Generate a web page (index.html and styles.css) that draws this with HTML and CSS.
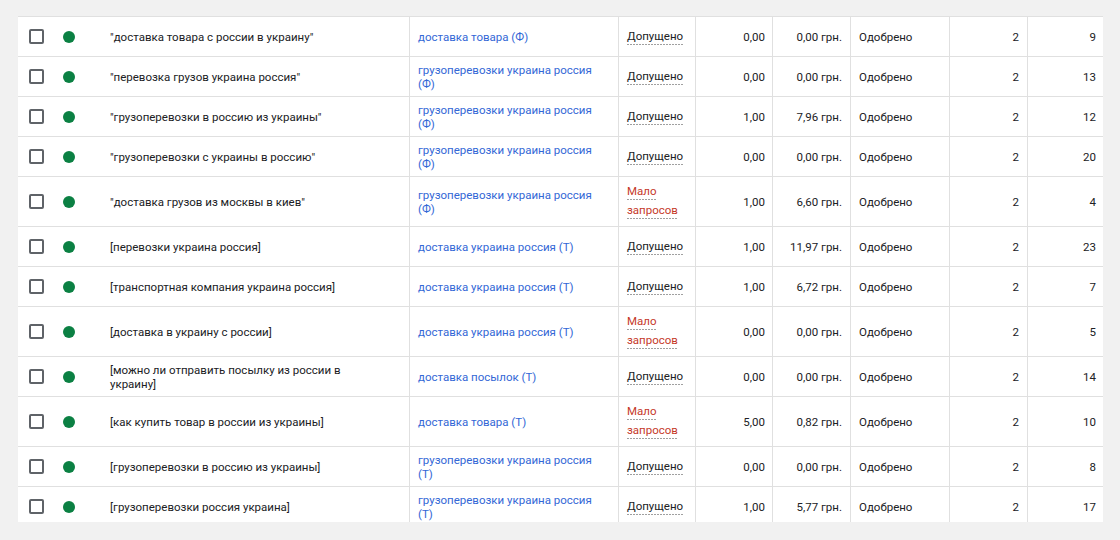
FILE: index.html
```html
<!DOCTYPE html>
<html lang="ru">
<head>
<meta charset="utf-8">
<link rel="stylesheet" href="styles.css">
</head>
<body>
<div class="sheet">
  <div class="row">
    <div class="c cb"><span class="box"></span></div><div class="c st"><span class="dot"></span></div>
    <div class="c kw">"доставка товара с россии в украину"</div>
    <div class="c crit"><a>доставка товара (Ф)</a></div>
    <div class="c status"><div><span class="u">Допущено</span></div></div>
    <div class="c num">0,00</div><div class="c num">0,00 грн.</div>
    <div class="c txt">Одобрено</div><div class="c num">2</div><div class="c num">9</div>
  </div>
  <div class="row">
    <div class="c cb"><span class="box"></span></div><div class="c st"><span class="dot"></span></div>
    <div class="c kw">"перевозка грузов украина россия"</div>
    <div class="c crit"><a>грузоперевозки украина россия (Ф)</a></div>
    <div class="c status"><div><span class="u">Допущено</span></div></div>
    <div class="c num">0,00</div><div class="c num">0,00 грн.</div>
    <div class="c txt">Одобрено</div><div class="c num">2</div><div class="c num">13</div>
  </div>
  <div class="row">
    <div class="c cb"><span class="box"></span></div><div class="c st"><span class="dot"></span></div>
    <div class="c kw">"грузоперевозки в россию из украины"</div>
    <div class="c crit"><a>грузоперевозки украина россия (Ф)</a></div>
    <div class="c status"><div><span class="u">Допущено</span></div></div>
    <div class="c num">1,00</div><div class="c num">7,96 грн.</div>
    <div class="c txt">Одобрено</div><div class="c num">2</div><div class="c num">12</div>
  </div>
  <div class="row">
    <div class="c cb"><span class="box"></span></div><div class="c st"><span class="dot"></span></div>
    <div class="c kw">"грузоперевозки с украины в россию"</div>
    <div class="c crit"><a>грузоперевозки украина россия (Ф)</a></div>
    <div class="c status"><div><span class="u">Допущено</span></div></div>
    <div class="c num">0,00</div><div class="c num">0,00 грн.</div>
    <div class="c txt">Одобрено</div><div class="c num">2</div><div class="c num">20</div>
  </div>
  <div class="row">
    <div class="c cb"><span class="box"></span></div><div class="c st"><span class="dot"></span></div>
    <div class="c kw">"доставка грузов из москвы в киев"</div>
    <div class="c crit"><a>грузоперевозки украина россия (Ф)</a></div>
    <div class="c status low"><div><span class="u">Мало запросов</span></div></div>
    <div class="c num">1,00</div><div class="c num">6,60 грн.</div>
    <div class="c txt">Одобрено</div><div class="c num">2</div><div class="c num">4</div>
  </div>
  <div class="row">
    <div class="c cb"><span class="box"></span></div><div class="c st"><span class="dot"></span></div>
    <div class="c kw">[перевозки украина россия]</div>
    <div class="c crit"><a>доставка украина россия (Т)</a></div>
    <div class="c status"><div><span class="u">Допущено</span></div></div>
    <div class="c num">1,00</div><div class="c num">11,97 грн.</div>
    <div class="c txt">Одобрено</div><div class="c num">2</div><div class="c num">23</div>
  </div>
  <div class="row">
    <div class="c cb"><span class="box"></span></div><div class="c st"><span class="dot"></span></div>
    <div class="c kw">[транспортная компания украина россия]</div>
    <div class="c crit"><a>доставка украина россия (Т)</a></div>
    <div class="c status"><div><span class="u">Допущено</span></div></div>
    <div class="c num">1,00</div><div class="c num">6,72 грн.</div>
    <div class="c txt">Одобрено</div><div class="c num">2</div><div class="c num">7</div>
  </div>
  <div class="row">
    <div class="c cb"><span class="box"></span></div><div class="c st"><span class="dot"></span></div>
    <div class="c kw">[доставка в украину с россии]</div>
    <div class="c crit"><a>доставка украина россия (Т)</a></div>
    <div class="c status low"><div><span class="u">Мало запросов</span></div></div>
    <div class="c num">0,00</div><div class="c num">0,00 грн.</div>
    <div class="c txt">Одобрено</div><div class="c num">2</div><div class="c num">5</div>
  </div>
  <div class="row">
    <div class="c cb"><span class="box"></span></div><div class="c st"><span class="dot"></span></div>
    <div class="c kw">[можно ли отправить посылку из россии в украину]</div>
    <div class="c crit"><a>доставка посылок (Т)</a></div>
    <div class="c status"><div><span class="u">Допущено</span></div></div>
    <div class="c num">0,00</div><div class="c num">0,00 грн.</div>
    <div class="c txt">Одобрено</div><div class="c num">2</div><div class="c num">14</div>
  </div>
  <div class="row">
    <div class="c cb"><span class="box"></span></div><div class="c st"><span class="dot"></span></div>
    <div class="c kw">[как купить товар в россии из украины]</div>
    <div class="c crit"><a>доставка товара (Т)</a></div>
    <div class="c status low"><div><span class="u">Мало запросов</span></div></div>
    <div class="c num">5,00</div><div class="c num">0,82 грн.</div>
    <div class="c txt">Одобрено</div><div class="c num">2</div><div class="c num">10</div>
  </div>
  <div class="row">
    <div class="c cb"><span class="box"></span></div><div class="c st"><span class="dot"></span></div>
    <div class="c kw">[грузоперевозки в россию из украины]</div>
    <div class="c crit"><a>грузоперевозки украина россия (Т)</a></div>
    <div class="c status"><div><span class="u">Допущено</span></div></div>
    <div class="c num">0,00</div><div class="c num">0,00 грн.</div>
    <div class="c txt">Одобрено</div><div class="c num">2</div><div class="c num">8</div>
  </div>
  <div class="row">
    <div class="c cb"><span class="box"></span></div><div class="c st"><span class="dot"></span></div>
    <div class="c kw">[грузоперевозки россия украина]</div>
    <div class="c crit"><a>грузоперевозки украина россия (Т)</a></div>
    <div class="c status"><div><span class="u">Допущено</span></div></div>
    <div class="c num">1,00</div><div class="c num">5,77 грн.</div>
    <div class="c txt">Одобрено</div><div class="c num">2</div><div class="c num">17</div>
  </div>
</div>
</body>
</html>
```
FILE: styles.css
```css
html, body {
  margin: 0;
  padding: 0;
  background: #f1f1f1;
}
body {
  font-family: Roboto, "Liberation Sans", sans-serif;
  font-size: 11.5px;
  line-height: 14px;
  color: #202124;
}
.sheet {
  margin: 16px 17px 0 18px;
  height: 506px;
  overflow: hidden;
  background: #fff;
  border-top: 1px solid #e0e0e0;
  box-sizing: border-box;
}
.row {
  display: grid;
  grid-template-columns: 37px 47px 307px 209px 77px 77px 78px 99px 78px 76px;
  min-height: 39px;
  border-bottom: 1px solid #e0e0e0;
}
.c {
  display: flex;
  align-items: center;
  box-sizing: border-box;
  min-width: 0;
}
.cb {
  padding-left: 11px;
}
.box {
  display: block;
  width: 15px;
  height: 15px;
  box-sizing: border-box;
  border: 2px solid #5f6368;
  border-radius: 2px;
}
.st {
  padding-left: 8px;
}
.dot {
  display: block;
  width: 12px;
  height: 12px;
  border-radius: 50%;
  background: #0b8043;
}
.kw {
  padding: 0 60px 0 8px;
}
.crit {
  border-left: 1px solid #e0e0e0;
  padding: 0 14px 0 8px;
}
.crit a {
  color: #3367d6;
  text-decoration: none;
}
.status {
  border-left: 1px solid #e0e0e0;
  padding: 5px 4px 6px 8px;
  line-height: 19px;
}
.status .u {
  padding-bottom: 2px;
  background: linear-gradient(to right, #a0a0a0 66%, transparent 0) left bottom / 3px 1px repeat-x;
}
.status.low {
  color: #c53929;
}
.num {
  border-left: 1px solid #e0e0e0;
  justify-content: flex-end;
  padding-right: 7px;
}
.txt {
  border-left: 1px solid #e0e0e0;
  padding-left: 8px;
}
.row .c:nth-child(7),
.row .c:nth-child(9) {
  padding-right: 8px;
}
```
